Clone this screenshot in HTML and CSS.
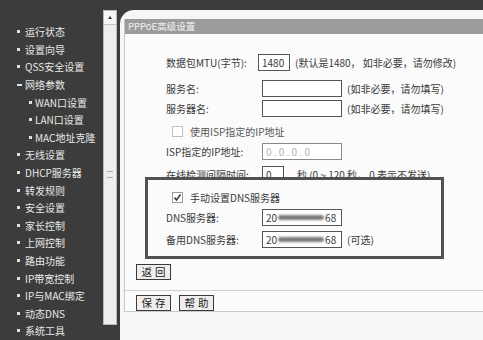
FILE: index.html
```html
<!DOCTYPE html>
<html lang="zh-CN">
<head>
  <meta charset="UTF-8">
  <title>PPPoE高级设置</title>
  <link rel="stylesheet" href="styles.css">
</head>
<body>
  <div class="menu">
    <div class="item">运行状态</div>
    <div class="item">设置向导</div>
    <div class="item">QSS安全设置</div>
    <div class="item open">网络参数</div>
    <div class="item sub">WAN口设置</div>
    <div class="item sub">LAN口设置</div>
    <div class="item sub">MAC地址克隆</div>
    <div class="item">无线设置</div>
    <div class="item">DHCP服务器</div>
    <div class="item">转发规则</div>
    <div class="item">安全设置</div>
    <div class="item">家长控制</div>
    <div class="item">上网控制</div>
    <div class="item">路由功能</div>
    <div class="item">IP带宽控制</div>
    <div class="item">IP与MAC绑定</div>
    <div class="item">动态DNS</div>
    <div class="item">系统工具</div>
  </div>

  <div class="scrollbar">
    <div class="arrow"></div>
    <div class="grip"></div>
  </div>

  <div class="main">
    <div class="panel">
      <div class="panel-title">PPPoE高级设置</div>

      <div class="form">
        <div class="row r-mtu">
          <span class="label">数据包MTU(字节):</span>
          <span class="field mtu">1480</span>
          <span class="hint">(默认是1480， 如非必要，请勿修改)</span>
        </div>
        <div class="row r-service">
          <span class="label">服务名:</span>
          <span class="field"></span>
          <span class="hint">(如非必要，请勿填写)</span>
        </div>
        <div class="row">
          <span class="label">服务器名:</span>
          <span class="field"></span>
          <span class="hint">(如非必要，请勿填写)</span>
        </div>
        <div class="row r-isp">
          <span class="check off"></span>
          <span class="muted">使用ISP指定的IP地址</span>
        </div>
        <div class="row">
          <span class="label">ISP指定的IP地址:</span>
          <span class="field off">0 . 0 . 0 . 0</span>
        </div>
        <div class="row r-echo">
          <span class="label">在线检测间隔时间:</span>
          <span class="field echo">0</span>
          <span class="hint">秒 (0 ~ 120 秒， 0 表示不发送)</span>
        </div>

        <div class="dns-box">
          <div class="row">
            <span class="check">
              <svg width="9" height="9" viewBox="0 0 9 9"><polyline points="1.5,4.5 3.5,7 7.5,1.5" fill="none" stroke="#333" stroke-width="1.4"/></svg>
            </span>
            <span>手动设置DNS服务器</span>
          </div>
          <div class="row">
            <span class="label">DNS服务器:</span>
            <span class="field">20<span class="blur"></span>68</span>
          </div>
          <div class="row r-alt">
            <span class="label">备用DNS服务器:</span>
            <span class="field">20<span class="blur"></span>68</span>
            <span class="hint">(可选)</span>
          </div>
        </div>
      </div>

      <div class="back">
        <span class="btn">返回</span>
      </div>
      <div class="actions">
        <span class="btn">保存</span>
        <span class="btn">帮助</span>
      </div>
    </div>
  </div>
</body>
</html>
```

FILE: styles.css
```css
body {
  margin: 0;
  width: 483px;
  height: 340px;
  overflow: hidden;
  display: flex;
  background-color: #3c3c3c;
  font-family: "Noto Sans CJK SC", "Liberation Sans", sans-serif;
  font-size: 10px;
  color: #3a3a3a;
}

/* menu on the left */
.menu {
  width: 103px;
  flex-shrink: 0;
  padding-top: 23px;
  color: #e8e8e8;
}

.item {
  display: flex;
  align-items: center;
  height: 17.6px;
  padding-left: 17px;
  white-space: nowrap;
}
.item::before {
  content: "";
  width: 3px;
  height: 3px;
  margin-right: 5px;
  background-color: #e0e0e0;
}
.item.open::before { width: 5px; height: 2px; margin-right: 3px; }
.item.sub { padding-left: 29px; }
.item.sub::before { margin-right: 3px; }

.scrollbar {
  width: 12px;
  height: 313px;
  margin-top: 10px;
  flex-shrink: 0;
  background-color: #eeeeee;
  border: 1px solid #b8b8b8;
  position: relative;
}
.arrow {
  height: 13px;
  border-bottom: 1px solid #c4c4c4;
  background-color: #f6f6f6;
  display: flex;
  justify-content: center;
  align-items: center;
}
.arrow::before {
  content: "";
  border-left: 2px solid transparent;
  border-right: 2px solid transparent;
  border-bottom: 3px solid #333;
}
.grip {
  position: absolute;
  top: 160px;
  left: 3px;
  width: 6px;
  height: 5px;
  border-top: 1px solid #aaa;
  border-bottom: 1px solid #aaa;
}

/* main area */
.main {
  flex: 1;
  margin: 10px 0 0 3px;
  padding: 9px 0 0 4px;
  background-color: #f6f6f6;
  border-top-left-radius: 14px;
}

.panel {
  background-color: #fbfbfb;
  border-left: 1px solid #c6c6c6;
  border-bottom: 1px solid #c9c9c9;
}

.panel-title {
  height: 15px;
  line-height: 15px;
  padding-left: 3px;
  background-color: #9c9c9c;
  color: #f2f2f2;
  font-size: 9.5px;
}

.form {
  padding: 18px 0 0 41px;
}

.row {
  display: flex;
  align-items: center;
  height: 20px;
  white-space: nowrap;
}
.r-service { margin-top: 6px; }
.r-isp { margin-top: 3px; }
.r-echo { margin-top: 3px; }
.r-alt { margin-top: 2px; }

.label { width: 96px; }

.field {
  box-sizing: border-box;
  width: 80px;
  height: 17px;
  line-height: 15px;
  padding-left: 3px;
  border: 1px solid #555;
  background-color: #fff;
  display: flex;
  align-items: center;
}
.field.mtu { width: 32px; margin-left: -4px; }
.field.echo { width: 22px; }
.field.off { border-color: #8a8a8a; color: #b4b4b4; }

.hint { margin-left: 5px; }
.field.echo + .hint { margin-left: 13px; }

.blur {
  width: 46px;
  height: 5px;
  margin: 0 1px;
  border-radius: 3px;
  background-color: #7a7a7a;
  filter: blur(0.8px);
}

.check {
  box-sizing: border-box;
  width: 11px;
  height: 11px;
  margin: 0 7px 0 6px;
  border: 1px solid #9a9a9a;
  background-color: #fff;
  display: flex;
  align-items: center;
  justify-content: center;
}
.check.off { border-color: #c0c0c0; }
.muted { color: #555; }

.dns-box {
  position: relative;
  box-sizing: border-box;
  width: 299px;
  margin: -7px 0 0 -21px;
  padding: 7px 0 7px 18px;
  border: 3px solid #515151;
  background-color: #fbfbfb;
}

/* buttons */
.back {
  padding: 5px 0 0 11px;
}

.actions {
  display: flex;
  gap: 8px;
  margin-top: 10px;
  padding: 4px 0 0 11px;
  border-top: 1px solid #cfcfcf;
}

.btn {
  display: inline-block;
  box-sizing: border-box;
  width: 35px;
  height: 16px;
  line-height: 14px;
  text-align: center;
  letter-spacing: 3px;
  text-indent: 3px;
  border: 1px solid #3a3a3a;
  background-color: #eeeeee;
  color: #222;
  font-size: 10.5px;
}
```
